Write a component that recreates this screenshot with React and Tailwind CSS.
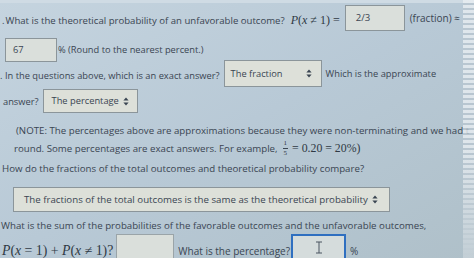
import React from "react";

const serif = "font-['Liberation_Serif',serif]";

function Arrows() {
  return (
    <svg width="6" height="9" viewBox="0 0 6 9" className="shrink-0">
      <path d="M3 0.5 L5.6 3.6 L0.4 3.6 Z" fill="#3a4552" />
      <path d="M3 8.5 L5.6 5.4 L0.4 5.4 Z" fill="#3a4552" />
    </svg>
  );
}

function Fraction({ n, d }) {
  return (
    <span className="inline-flex flex-col items-center mx-[2px] align-middle leading-none text-[7px]">
      <span className="px-[1px]">{n}</span>
      <span className="w-full h-px bg-[#3a4552] my-[1px]" />
      <span className="px-[1px]">{d}</span>
    </span>
  );
}

export default function App() {
  return (
    <div className="relative w-[474px] h-[258px] overflow-hidden bg-linear-to-br from-[#c5d4df] via-[#b8c9d6] to-[#afc0c9] font-['Open_Sans',sans-serif] text-[9.7px] leading-none text-[#3a4552]">
      <div className="h-[3px] bg-[#cfdbe4]" />
      <div className="flex flex-col">
        {/* row 1 */}
        <div className="mt-[2px] h-[26px] flex items-center pl-[2px] text-[9.6px]">
          <span className="mt-[6px]">.</span>
          <span className="ml-[1px] mt-[5px] whitespace-nowrap">What is the theoretical probability of an unfavorable outcome?</span>
          <span className={`${serif} ml-[6px] mt-[4px] text-[12px] text-[#2f3944] whitespace-nowrap`}>
            <i>P</i>(<i>x</i> ≠ 1) =
          </span>
          <div className="ml-[5px] shrink-0 w-[60px] h-[26px] bg-[#dadfdb] border border-[#8b959a] flex items-center pl-[10px]">2/3</div>
          <span className="ml-[5px] whitespace-nowrap text-[10px]">(fraction) ≈</span>
        </div>
        {/* row 2 */}
        <div className="mt-[7px] h-[24px] flex items-center pl-[5px] text-[9.3px]">
          <div className="w-[52px] h-[24px] bg-[#dadfdb] border border-[#8b959a] flex items-center pl-[7px]">67</div>
          <span className="ml-[1px]">% (Round to the nearest percent.)</span>
        </div>
        {/* row 3 */}
        <div className="mt-[-2px] h-[27px] flex items-center pl-[0px] text-[9.3px]">
          <span className="mt-[4px] w-[5px]">.</span>
          <span className="mt-[4px] whitespace-nowrap">In the questions above, which is an exact answer?</span>
          <div className="ml-[4px] shrink-0 w-[98px] h-[27px] bg-[#dde0d9] border border-[#8b959a] flex items-center justify-between pl-[6px] pr-[9px]">
            <span>The fraction</span>
            <Arrows />
          </div>
          <span className="ml-[4px] whitespace-nowrap">Which is the approximate</span>
        </div>
        {/* row 4 */}
        <div className="mt-[2px] h-[24px] flex items-center pl-[3px] text-[9.3px]">
          <span className="mt-[2px]">answer?</span>
          <div className="ml-[4px] w-[95px] h-[24px] bg-[#dde0d9] border border-[#8b959a] flex items-center justify-between pl-[8px] pr-[8px]">
            <span>The percentage</span>
            <Arrows />
          </div>
        </div>
        {/* note */}
        <div className="mt-[13px] pl-[16px] whitespace-nowrap">
          (NOTE: The percentages above are approximations because they were non-terminating and we had t
        </div>
        <div className="mt-[5px] h-[16px] pl-[14px] whitespace-nowrap flex items-center">
          <span>round. Some percentages are exact answers. For example,</span>
          <span className={`${serif} ml-[3px] text-[11.8px] flex items-center text-[#2f3944]`}>
            <Fraction n="1" d="5" />
            <span className="ml-[2px]">= 0.20 = 20%)</span>
          </span>
        </div>
        <div className="mt-[7px] pl-[2px] whitespace-nowrap">
          How do the fractions of the total outcomes and theoretical probability compare?
        </div>
        {/* big select */}
        <div className="mt-[14px] ml-[13px] w-[377px] h-[25px] bg-[#dde0d9] border border-[#8b959a] flex items-center pl-[10px] pr-[11px] justify-between text-[9.7px]">
          <span className="whitespace-nowrap">The fractions of the total outcomes is the same as the theoretical probability</span>
          <Arrows />
        </div>
        <div className="mt-[9px] pl-[1px] whitespace-nowrap">
          What is the sum of the probabilities of the favorable outcomes and the unfavorable outcomes,
        </div>
        {/* last row */}
        <div className="mt-[3px] h-[26px] flex items-center pl-[2px] text-[10px]">
          <span className={`${serif} mt-[8px] text-[13.8px] text-[#2f3944] whitespace-nowrap`}>
            <i>P</i>(<i>x</i> = 1) + <i>P</i>(<i>x</i> ≠ 1)?
          </span>
          <div className="ml-[3px] shrink-0 w-[58px] h-[26px] bg-[#dadfdb] border border-[#9aa4a8]" />
          <span className="ml-[4px] mt-[8px] whitespace-nowrap">What is the percentage?</span>
          <div className="ml-[1px] shrink-0 w-[55px] h-[26px] bg-[#d5dcdc] border-2 border-[#2f6fc0] flex items-center justify-center">
            <svg width="8" height="13" viewBox="0 0 8 13">
              <path d="M1 1 H7 M4 1 V12 M1 12 H7" stroke="#4a5561" strokeWidth="1" fill="none" />
            </svg>
          </div>
          <span className="ml-[4px] mt-[8px]">%</span>
        </div>
      </div>
      {/* right strip */}
      <div className="absolute top-0 right-0 h-full w-[11px] bg-[repeating-linear-gradient(to_bottom,#e9eef2_0px,#e9eef2_3px,#b9c6d0_3px,#b9c6d0_5px)] opacity-80" />
      <div className="absolute bottom-0 right-0 h-[110px] w-[11px] bg-linear-to-b from-transparent to-[#c3cfd6]" />
    </div>
  );
}
